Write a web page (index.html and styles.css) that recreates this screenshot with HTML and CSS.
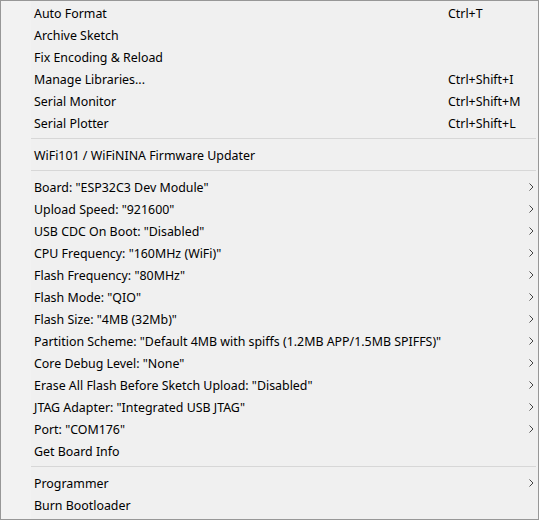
FILE: index.html
```html
<!DOCTYPE html>
<html>
<head>
<meta charset="utf-8">
<link rel="stylesheet" href="styles.css">
</head>
<body>
<div class="menu">
  <div class="item"><span class="label">Auto Format</span><span class="key">Ctrl+T</span><span class="sub"></span></div>
  <div class="item"><span class="label">Archive Sketch</span><span class="key"></span><span class="sub"></span></div>
  <div class="item"><span class="label">Fix Encoding &amp; Reload</span><span class="key"></span><span class="sub"></span></div>
  <div class="item"><span class="label">Manage Libraries...</span><span class="key">Ctrl+Shift+I</span><span class="sub"></span></div>
  <div class="item"><span class="label">Serial Monitor</span><span class="key">Ctrl+Shift+M</span><span class="sub"></span></div>
  <div class="item"><span class="label">Serial Plotter</span><span class="key">Ctrl+Shift+L</span><span class="sub"></span></div>
  <div class="sep"></div>
  <div class="item"><span class="label">WiFi101 / WiFiNINA Firmware Updater</span><span class="key"></span><span class="sub"></span></div>
  <div class="sep"></div>
  <div class="item"><span class="label">Board: "ESP32C3 Dev Module"</span><span class="key"></span><span class="sub"><svg class="chev" width="5" height="8" viewBox="0 0 5 8"><path d="M0.5 0.5 L4 4 L0.5 7.5" /></svg></span></div>
  <div class="item"><span class="label">Upload Speed: "921600"</span><span class="key"></span><span class="sub"><svg class="chev" width="5" height="8" viewBox="0 0 5 8"><path d="M0.5 0.5 L4 4 L0.5 7.5" /></svg></span></div>
  <div class="item"><span class="label">USB CDC On Boot: "Disabled"</span><span class="key"></span><span class="sub"><svg class="chev" width="5" height="8" viewBox="0 0 5 8"><path d="M0.5 0.5 L4 4 L0.5 7.5" /></svg></span></div>
  <div class="item"><span class="label">CPU Frequency: "160MHz (WiFi)"</span><span class="key"></span><span class="sub"><svg class="chev" width="5" height="8" viewBox="0 0 5 8"><path d="M0.5 0.5 L4 4 L0.5 7.5" /></svg></span></div>
  <div class="item"><span class="label">Flash Frequency: "80MHz"</span><span class="key"></span><span class="sub"><svg class="chev" width="5" height="8" viewBox="0 0 5 8"><path d="M0.5 0.5 L4 4 L0.5 7.5" /></svg></span></div>
  <div class="item"><span class="label">Flash Mode: "QIO"</span><span class="key"></span><span class="sub"><svg class="chev" width="5" height="8" viewBox="0 0 5 8"><path d="M0.5 0.5 L4 4 L0.5 7.5" /></svg></span></div>
  <div class="item"><span class="label">Flash Size: "4MB (32Mb)"</span><span class="key"></span><span class="sub"><svg class="chev" width="5" height="8" viewBox="0 0 5 8"><path d="M0.5 0.5 L4 4 L0.5 7.5" /></svg></span></div>
  <div class="item"><span class="label">Partition Scheme: "Default 4MB with spiffs (1.2MB APP/1.5MB SPIFFS)"</span><span class="key"></span><span class="sub"><svg class="chev" width="5" height="8" viewBox="0 0 5 8"><path d="M0.5 0.5 L4 4 L0.5 7.5" /></svg></span></div>
  <div class="item"><span class="label">Core Debug Level: "None"</span><span class="key"></span><span class="sub"><svg class="chev" width="5" height="8" viewBox="0 0 5 8"><path d="M0.5 0.5 L4 4 L0.5 7.5" /></svg></span></div>
  <div class="item"><span class="label">Erase All Flash Before Sketch Upload: "Disabled"</span><span class="key"></span><span class="sub"><svg class="chev" width="5" height="8" viewBox="0 0 5 8"><path d="M0.5 0.5 L4 4 L0.5 7.5" /></svg></span></div>
  <div class="item"><span class="label">JTAG Adapter: "Integrated USB JTAG"</span><span class="key"></span><span class="sub"><svg class="chev" width="5" height="8" viewBox="0 0 5 8"><path d="M0.5 0.5 L4 4 L0.5 7.5" /></svg></span></div>
  <div class="item"><span class="label">Port: "COM176"</span><span class="key"></span><span class="sub"><svg class="chev" width="5" height="8" viewBox="0 0 5 8"><path d="M0.5 0.5 L4 4 L0.5 7.5" /></svg></span></div>
  <div class="item"><span class="label">Get Board Info</span><span class="key"></span><span class="sub"></span></div>
  <div class="sep"></div>
  <div class="item"><span class="label">Programmer</span><span class="key"></span><span class="sub"><svg class="chev" width="5" height="8" viewBox="0 0 5 8"><path d="M0.5 0.5 L4 4 L0.5 7.5" /></svg></span></div>
  <div class="item"><span class="label">Burn Bootloader</span><span class="key"></span><span class="sub"></span></div>
</div>
</body>
</html>
```
FILE: styles.css
```css
html, body {
  margin: 0;
  padding: 0;
  background: #f0f0f0;
}
.menu {
  box-sizing: border-box;
  width: 539px;
  height: 520px;
  border: 1px solid #979797;
  padding: 1px 0 3px 0;
  background: linear-gradient(to right, #f2f2f2 0, #f2f2f2 30px, #f0f0f0 30px);
  font-family: "Noto Sans", "Open Sans", sans-serif;
  font-size: 12.4px;
  color: #000;
}
.item {
  display: flex;
  align-items: center;
  height: 22px;
  padding-left: 33px;
  white-space: nowrap;
}
.label {
  width: 414px;
  flex: none;
}
.key {
  width: 72px;
  flex: none;
}
.sub {
  flex: 1;
  display: flex;
  align-items: center;
  padding-left: 9px;
}
.chev {
  display: block;
  fill: none;
  stroke: #444;
  stroke-width: 1;
}
.sep {
  height: 1px;
  margin: 4px 2px 5px 30px;
  background: #d7d7d7;
}
```
